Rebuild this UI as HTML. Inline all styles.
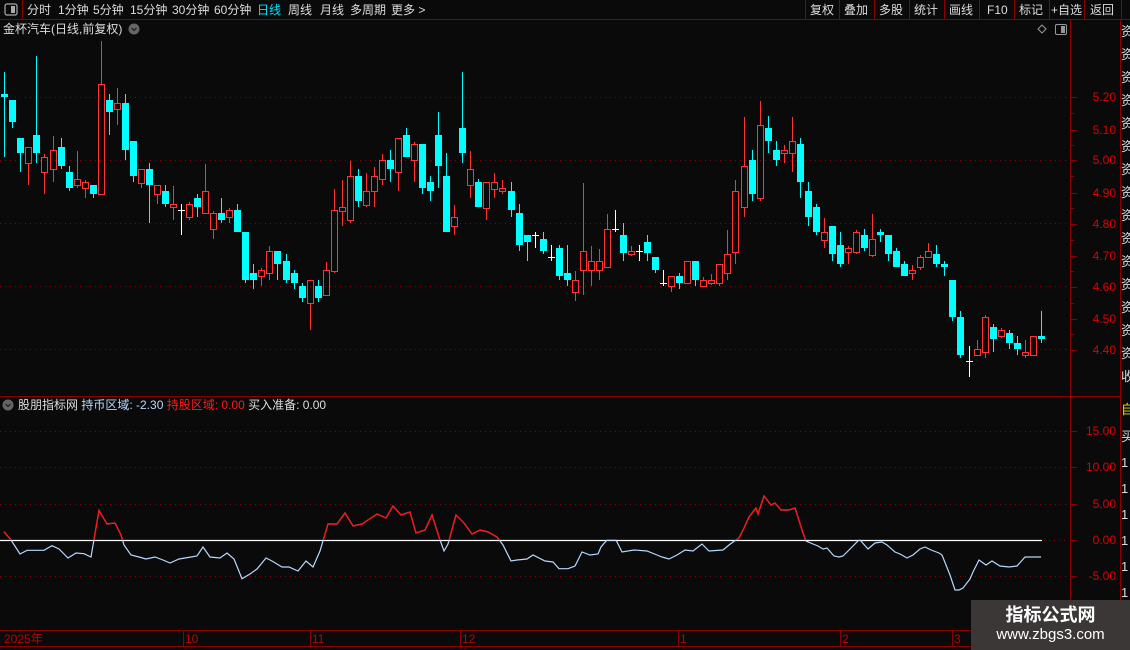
<!DOCTYPE html>
<html><head><meta charset="utf-8"><style>
html,body{margin:0;padding:0;background:#0a0a0a;}
body{width:1130px;height:650px;position:relative;overflow:hidden;font-family:"Liberation Sans","Noto Sans CJK SC",sans-serif;color:#ddd;}
.t{position:absolute;font-size:12px;white-space:nowrap;line-height:14px;}
</style></head><body>
<svg id="s" width="1130" height="650" style="position:absolute;left:0;top:0" xmlns="http://www.w3.org/2000/svg">
<defs><clipPath id="up"><rect x="0" y="400" width="1070" height="140"/></clipPath></defs>
<rect x="0" y="0" width="1130" height="650" fill="#0a0a0a"/>
<!-- top bar -->
<line x1="0" y1="19.5" x2="1130" y2="19.5" stroke="#8b0000"/>
<line x1="22.5" y1="0" x2="22.5" y2="19" stroke="#8b0000"/>
<rect x="5" y="4" width="12" height="11" rx="2" fill="none" stroke="#aaa" stroke-width="1.2"/>
<rect x="11" y="6" width="4" height="7" fill="#aaa"/>
<g stroke="#8b0000">
<line x1="805.5" y1="0" x2="805.5" y2="19"/><line x1="839.5" y1="0" x2="839.5" y2="19"/>
<line x1="874.5" y1="0" x2="874.5" y2="19"/><line x1="909.5" y1="0" x2="909.5" y2="19"/>
<line x1="944.5" y1="0" x2="944.5" y2="19"/><line x1="979.5" y1="0" x2="979.5" y2="19"/>
<line x1="1014.5" y1="0" x2="1014.5" y2="19"/><line x1="1049.5" y1="0" x2="1049.5" y2="19"/>
<line x1="1084.5" y1="0" x2="1084.5" y2="19"/><line x1="1121.5" y1="0" x2="1121.5" y2="19"/>
</g>
<!-- axes -->
<line x1="1070.5" y1="20" x2="1070.5" y2="630" stroke="#8b0000"/>
<line x1="1120.5" y1="20" x2="1120.5" y2="650" stroke="#8b0000"/>
<line x1="0" y1="396.5" x2="1120" y2="396.5" stroke="#8b0000"/>
<line x1="0" y1="630.5" x2="1070" y2="630.5" stroke="#8b0000"/>
<line x1="0" y1="646.5" x2="1070" y2="646.5" stroke="#8b0000"/>
<g stroke="#8b0000" stroke-dasharray="1,4">
<line x1="0" y1="97.5" x2="1068" y2="97.5"/><line x1="0" y1="160.5" x2="1068" y2="160.5"/>
<line x1="0" y1="223.5" x2="1068" y2="223.5"/><line x1="0" y1="286.5" x2="1068" y2="286.5"/>
<line x1="0" y1="349.5" x2="1068" y2="349.5"/>
<line x1="0" y1="431.5" x2="1068" y2="431.5"/><line x1="0" y1="467.5" x2="1068" y2="467.5"/>
<line x1="0" y1="504.5" x2="1068" y2="504.5"/><line x1="0" y1="576.5" x2="1068" y2="576.5"/>
<line x1="1044" y1="540.5" x2="1068" y2="540.5"/>
</g>
<g stroke="#8b0000" id="ticks"></g>
<g stroke="#8b0000">
<line x1="183.5" y1="630" x2="183.5" y2="646"/><line x1="310.5" y1="630" x2="310.5" y2="646"/>
<line x1="460.5" y1="630" x2="460.5" y2="646"/><line x1="678.5" y1="630" x2="678.5" y2="646"/>
<line x1="840.5" y1="630" x2="840.5" y2="646"/><line x1="952.5" y1="630" x2="952.5" y2="646"/>
</g>
<g id="c"></g>
<line x1="0" y1="540.5" x2="1042" y2="540.5" stroke="#fff" stroke-width="1.3"/>
<polyline id="ind" fill="none" stroke="#b4d8ff" stroke-width="1.2"/>
<polyline id="ind2" fill="none" stroke="#ff1010" stroke-width="1.3" clip-path="url(#up)"/>
<!-- icons -->
<circle cx="134" cy="29" r="5.5" fill="#666"/><path d="M131.5 28 L134 30.5 L136.5 28" stroke="#222" stroke-width="1.3" fill="none"/>
<circle cx="8" cy="405" r="5.5" fill="#666"/><path d="M5.5 404 L8 406.5 L10.5 404" stroke="#222" stroke-width="1.3" fill="none"/>
<path d="M1042 25 L1046 29 L1042 33 L1038 29 Z" fill="none" stroke="#999"/>
<rect x="1055.5" y="24.5" width="11" height="10" rx="1.5" fill="none" stroke="#999"/><rect x="1061" y="26" width="4" height="7" fill="#999"/>
</svg>
<div class="t" style="left:27px;top:3px">分时</div>
<div class="t" style="left:58px;top:3px">1分钟</div>
<div class="t" style="left:93px;top:3px">5分钟</div>
<div class="t" style="left:130px;top:3px">15分钟</div>
<div class="t" style="left:172px;top:3px">30分钟</div>
<div class="t" style="left:214px;top:3px">60分钟</div>
<div class="t" style="left:257px;top:3px;color:#00e5ff">日线</div>
<div class="t" style="left:288px;top:3px">周线</div>
<div class="t" style="left:320px;top:3px">月线</div>
<div class="t" style="left:350px;top:3px">多周期</div>
<div class="t" style="left:391px;top:3px">更多 &gt;</div>
<div class="t" style="left:810px;top:3px">复权</div>
<div class="t" style="left:844px;top:3px">叠加</div>
<div class="t" style="left:879px;top:3px">多股</div>
<div class="t" style="left:914px;top:3px">统计</div>
<div class="t" style="left:949px;top:3px">画线</div>
<div class="t" style="left:987px;top:3px">F10</div>
<div class="t" style="left:1019px;top:3px">标记</div>
<div class="t" style="left:1051px;top:3px">+自选</div>
<div class="t" style="left:1090px;top:3px">返回</div>
<div class="t" style="left:3px;top:22px">金杯汽车(日线,前复权)</div>
<div class="t" style="left:18px;top:398px">股朋指标网 <span style="color:#b4d8ff">持币区域: -2.30</span> <span style="color:#ff1a1a">持股区域: 0.00</span> 买入准备: 0.00</div>
<div id="ax"></div>
<div class="t" style="left:4px;top:632px;color:#c00000">2025年</div>
<div class="t" style="left:185px;top:632px;color:#c00000">10</div>
<div class="t" style="left:312px;top:632px;color:#c00000">11</div>
<div class="t" style="left:462px;top:632px;color:#c00000">12</div>
<div class="t" style="left:680px;top:632px;color:#c00000">1</div>
<div class="t" style="left:842px;top:632px;color:#c00000">2</div>
<div class="t" style="left:954px;top:632px;color:#c00000">3</div>
<div style="position:absolute;left:1121px;top:20px;width:9px;height:630px;overflow:hidden;font-size:13px;line-height:23px;color:#ddd">
<div>资<br>资<br>资<br>资<br>资<br>资<br>资<br>资<br>资<br>资<br>资<br>资<br>资<br>资<br>资<br>收</div>
<div style="position:absolute;top:378px;color:#e0e000">自</div>
<div style="position:absolute;top:404px;line-height:26px">买<br>1<br>1<br>1<br>1<br>1<br>1<br>1<br>1</div>
</div>
<div style="position:absolute;left:971px;top:600px;width:159px;height:50px;background:#3b3737;color:#fff;text-align:center">
<div style="font-size:18px;font-weight:bold;line-height:20px;margin-top:5px">指标公式网</div>
<div style="font-size:15px;line-height:20px">www.zbgs3.com</div>
</div>
<script>
var D=[[94,97,72,157,'c'],[100,122,100,128,'c'],[138,153,138,172,'c'],[147,163,147,185,'r'],[135,153,56,163,'c'],[157,172,154,194,'r'],[150,169,136,182,'r'],[147,166,138,169,'c'],[172,188,166,191,'c'],[179,185,151,188,'r'],[182,188,180,198,'r'],[185,194,185,198,'c'],[84,194,41,194,'r'],[100,112,94,135,'c'],[103,109,88,125,'r'],[103,150,94,160,'c'],[141,176,141,182,'c'],[169,183,169,188,'r'],[169,185,163,223,'c'],[185,194,185,204,'r'],[191,204,185,207,'c'],[204,207,186,220,'r'],[210,210,204,235,'w'],[204,217,202,220,'r'],[198,207,194,217,'c'],[191,213,164,213,'r'],[213,229,211,239,'r'],[213,220,198,223,'c'],[210,217,208,223,'r'],[210,232,204,232,'c'],[232,280,232,283,'c'],[273,280,264,289,'c'],[270,276,268,286,'r'],[251,273,246,280,'r'],[251,264,251,280,'c'],[261,280,254,283,'c'],[273,283,270,289,'c'],[286,298,283,302,'c'],[280,303,280,330,'r'],[286,298,280,302,'c'],[270,295,262,295,'r'],[210,271,189,273,'r'],[207,211,180,226,'r'],[176,220,161,223,'r'],[176,201,169,207,'c'],[191,205,173,207,'r'],[176,191,167,207,'r'],[160,179,154,185,'r'],[160,169,150,182,'c'],[138,172,138,191,'r'],[135,157,128,157,'c'],[144,160,142,182,'r'],[144,188,144,194,'c'],[182,191,176,201,'c'],[135,166,112,188,'c'],[176,232,153,232,'c'],[217,226,205,235,'r'],[128,153,72,163,'c'],[169,185,151,198,'r'],[182,207,179,207,'c'],[182,208,182,220,'r'],[182,189,173,198,'r'],[188,191,180,194,'r'],[191,210,182,217,'c'],[213,245,204,251,'c'],[235,242,235,261,'c'],[235,235,232,248,'w'],[239,251,232,254,'c'],[257,257,245,261,'w'],[248,276,245,280,'c'],[273,280,245,286,'c'],[280,292,271,301,'r'],[251,270,183,295,'r'],[261,270,246,286,'r'],[261,270,249,280,'r'],[229,267,214,267,'r'],[229,229,210,232,'w'],[235,253,223,261,'c'],[251,254,246,256,'r'],[251,251,245,261,'w'],[242,253,235,261,'c'],[257,270,257,273,'c'],[283,283,270,286,'w'],[276,286,276,292,'r'],[276,283,273,289,'c'],[261,283,261,283,'r'],[261,280,261,286,'c'],[280,286,277,286,'r'],[280,283,274,285,'r'],[264,283,264,286,'r'],[254,273,230,280,'r'],[191,252,180,264,'r'],[166,207,117,217,'r'],[160,194,150,201,'c'],[125,198,101,201,'r'],[128,141,116,153,'c'],[150,160,141,166,'c'],[150,153,145,163,'r'],[141,153,117,172,'r'],[144,182,138,198,'c'],[191,217,182,226,'c'],[207,232,204,235,'c'],[232,240,218,248,'r'],[226,254,226,261,'c'],[245,264,232,267,'c'],[248,252,246,264,'r'],[232,252,230,254,'r'],[235,248,229,251,'c'],[239,255,214,257,'r'],[232,235,229,242,'c'],[235,254,235,261,'c'],[251,267,248,267,'c'],[264,276,261,276,'c'],[270,273,265,280,'r'],[257,267,255,270,'r'],[251,257,243,257,'r'],[254,264,245,267,'c'],[264,267,261,276,'c'],[280,317,280,321,'c'],[317,355,311,358,'c'],[361,361,346,377,'w'],[349,355,340,355,'r'],[317,352,315,358,'r'],[327,339,324,352,'c'],[330,336,328,338,'r'],[333,343,330,349,'c'],[343,349,336,355,'c'],[352,355,340,358,'r'],[336,355,336,355,'r'],[336,339,311,343,'c']];
var h='';
for(var i=0;i<D.length;i++){var d=D[i],x=Math.round(4.3+i*8.035)+0.5;
if(d[4]=='c'){h+='<line x1="'+x+'" y1="'+d[2]+'" x2="'+x+'" y2="'+d[3]+'" stroke="#00ffff"/><rect x="'+(x-3.5)+'" y="'+d[0]+'" width="7" height="'+Math.max(2,d[1]-d[0])+'" fill="#00ffff"/>';}
else if(d[4]=='r'){h+='<line x1="'+x+'" y1="'+d[2]+'" x2="'+x+'" y2="'+d[0]+'" stroke="#ff3333"/><line x1="'+x+'" y1="'+d[1]+'" x2="'+x+'" y2="'+d[3]+'" stroke="#ff3333"/><rect x="'+(x-3)+'" y="'+(d[0]+0.5)+'" width="6" height="'+Math.max(2,d[1]-d[0])+'" fill="none" stroke="#ff3333"/>';}
else{h+='<line x1="'+x+'" y1="'+d[2]+'" x2="'+x+'" y2="'+d[3]+'" stroke="#fff"/><line x1="'+(x-3.5)+'" y1="'+(d[0]+0.5)+'" x2="'+(x+3.5)+'" y2="'+(d[0]+0.5)+'" stroke="#fff"/>';}}
document.getElementById('c').innerHTML=h;
var P="4,531.7 11,540 20,554 27,550.3 44,550.3 52,545.7 59,549 68,558 76,553 84,553.7 91,557 99,510.3 107,524 115,523 121,535 124,545 131,555 139,557 146,559 155,557 163,560 170,563 179,559 191,557 197,556 203,547 210,557 220,558 227,553 234,559 242,578.7 250,574 257,569 266,558 272,561 282,567 289,567 298,571 306,561 313,567 320,551 328,524 337,524 345,513 353,526 362,524 377,514 386,518 393,506 401,515 410,512 416,533 425,530 432,515 440,540 444,551 448,544 456,515 464,523 472,534 480,530 488,532 497,537 503,545 511,561 517,560 527,559 533,555 545,561 553,562 559,568.7 568,568.7 575,566 582,552 590,555 598,554 601,547 607,540 613,540 616,540 622,552 634,550 647,551 657,555 662,557 669,559 675,556 677,555 685,550 693,551 702,544 709,551 723,550 729,545 733,542 739,538 744,528 749,517 756,508 758,514 764,496 771,505 775,503 781,510 789,510 795,508 803,533 806,541 813,544 818,546 823,549 827,548 834,556 839,557 843,556 852,547 859,540 860,540 868,549 875,543 882,542 887,545 895,552 900,554 907,558 913,555 920,549 925,547 931,550 939,553 942,555 950,575 955,590 959,590 963,588 970,579 973,572 979,560 986,565 992,561 1000,566 1009,567 1017,566 1025,557 1030,557 1041,557";
document.getElementById('ind').setAttribute('points',P);
document.getElementById('ind2').setAttribute('points',P);
var L=[["5.20",97],["5.10",130],["5.00",160],["4.90",193],["4.80",224],["4.70",256],["4.60",287],["4.50",319],["4.40",350],["15.00",431],["10.00",467],["5.00",504],["0.00",540],["-5.00",576]];
var a='',tk='';
for(var j=0;j<L.length;j++){a+='<div class="t" style="right:14px;top:'+(L[j][1]-7)+'px;color:#dd0000;text-align:right">'+L[j][0]+'</div>';tk+='<line x1="1071" y1="'+(L[j][1]+0.5)+'" x2="1077" y2="'+(L[j][1]+0.5)+'"/>';}
for(var k=0;k<8;k++){var yy=[113,145,176,208,240,271,303,334][k];tk+='<line x1="1071" y1="'+(yy+0.5)+'" x2="1074" y2="'+(yy+0.5)+'"/>';}
document.getElementById('ax').innerHTML=a;
document.getElementById('ticks').innerHTML=tk;
</script>
</body></html>
